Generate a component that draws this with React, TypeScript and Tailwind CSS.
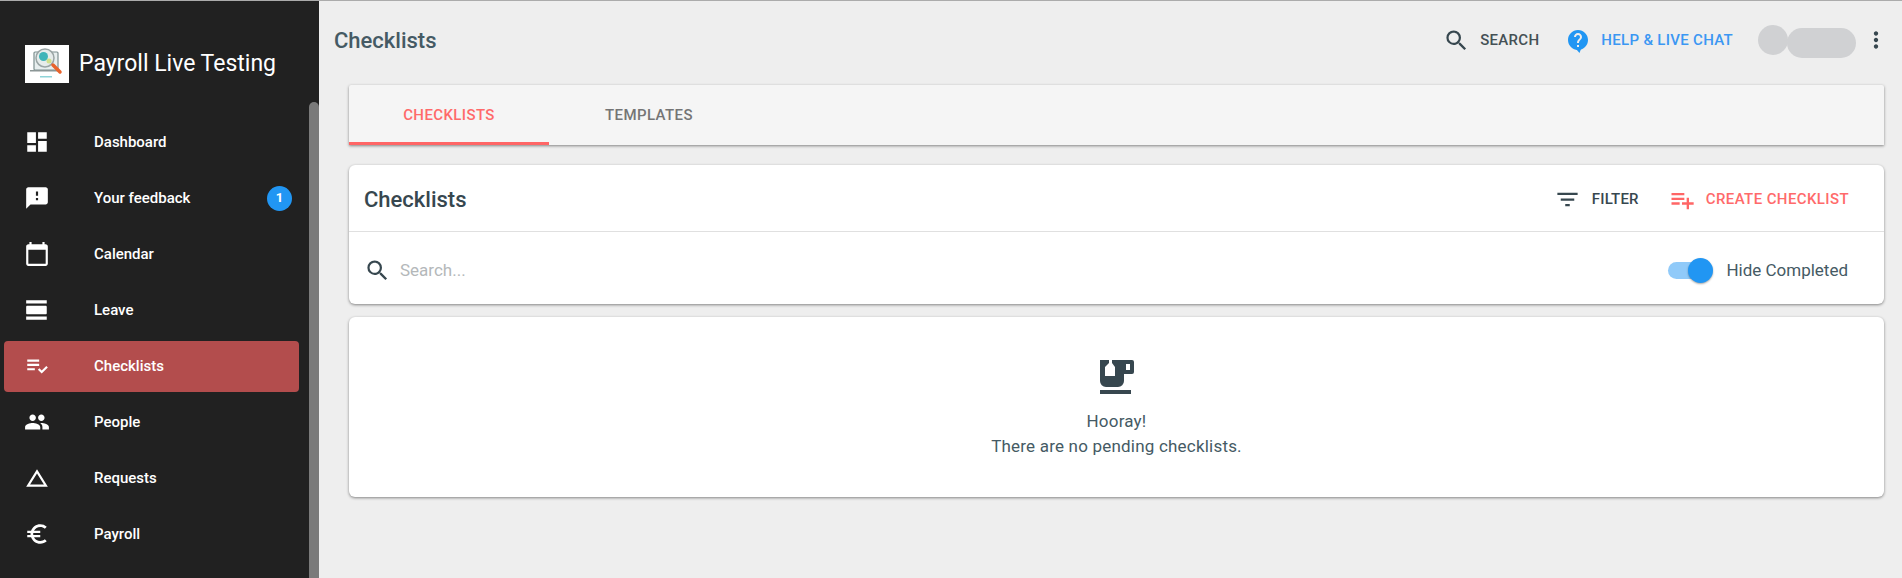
import React from "react";
import {
  MdDashboard, MdFeedback, MdCalendarToday, MdViewDay, MdPlaylistAddCheck, MdPeople,
  MdChangeHistory, MdEuroSymbol, MdSearch, MdMoreVert, MdFilterList, MdPlaylistAdd,
} from "react-icons/md";

const nav = [
  { label: "Dashboard", Icon: MdDashboard },
  { label: "Your feedback", Icon: MdFeedback, badge: "1" },
  { label: "Calendar", Icon: MdCalendarToday },
  { label: "Leave", Icon: MdViewDay },
  { label: "Checklists", Icon: MdPlaylistAddCheck, active: true },
  { label: "People", Icon: MdPeople },
  { label: "Requests", Icon: MdChangeHistory },
  { label: "Payroll", Icon: MdEuroSymbol },
];

function Logo() {
  return (
    <div className="w-[44px] h-[38px] bg-white shrink-0">
      <svg viewBox="0 0 44 38" width="44" height="38">
        <rect x="9" y="7" width="24" height="18" rx="1" fill="#e8efef" stroke="#7d8f8f" strokeWidth="1.2" />
        <rect x="5" y="25" width="30" height="1.5" fill="#8b9696" />
        <circle cx="20" cy="13" r="9" fill="#e6eceb" stroke="#9aa5a5" strokeWidth="1.5" />
        <circle cx="18.5" cy="11.5" r="4.5" fill="#3fb4b8" />
        <circle cx="24" cy="16" r="2.5" fill="#cfe08c" />
        <path d="M28 20l7 7" stroke="#e8632c" strokeWidth="3.5" strokeLinecap="round" />
        <rect x="15" y="31" width="12" height="1.5" fill="#8fd4d8" />
      </svg>
    </div>
  );
}

function HelpBubble() {
  return (
    <svg viewBox="2 2 20 23" width="20" height="23" className="ml-[29px] mt-[2px] text-[#2196f3]" fill="currentColor">
      <path d="M12 2C6.48 2 2 6.48 2 12s4.48 10 10 10 10-4.48 10-10S17.52 2 12 2zm1 17h-2v-2h2v2zm2.07-7.75l-.9.92C13.45 12.9 13 13.5 13 15h-2v-.5c0-1.1.45-2.1 1.17-2.83l1.24-1.26c.37-.36.59-.86.59-1.41 0-1.1-.9-2-2-2s-2 .9-2 2H8c0-2.21 1.79-4 4-4s4 1.79 4 4c0 .88-.36 1.68-.93 2.25z" />
      <path d="M10 21l3.5 4 1.5-4z" />
    </svg>
  );
}

function TeaCup() {
  return (
    <svg viewBox="0 0 34 34" width="34" height="34" className="text-[#37474f]" fill="currentColor">
      <path
        fillRule="evenodd"
        d="M0 0h9v3l-4 4v9h10V7l-3-4V0h20a2 2 0 0 1 2 2v10a2 2 0 0 1-2 2h-8v7a6 6 0 0 1-6 6H6a6 6 0 0 1-6-6V0zM26 4v6h4V4h-4z"
      />
      <rect x="0" y="30" width="31" height="4" />
    </svg>
  );
}

export default function App() {
  return (
    <div className="w-[1902px] h-[578px] overflow-hidden flex flex-col bg-[#eeeeee] font-['Roboto',sans-serif]">
      <div className="h-px bg-[#ababab] shrink-0" />
      <div className="flex flex-1 min-h-0">
        <aside className="w-[319px] shrink-0 flex bg-[#212121] overflow-hidden">
          <div className="w-[309px] shrink-0">
            <div className="h-[113px] pt-[44px] pl-[25px] flex items-start gap-[10px]">
              <Logo />
              <span className="text-[23px] leading-[38px] text-white whitespace-nowrap">Payroll Live Testing</span>
            </div>
            <nav className="flex flex-col pr-[10px] pl-[4px]">
              {nav.map(({ label, Icon, badge, active }) => (
                <div key={label} className="h-[56px] shrink-0 flex items-center">
                  <div className={`w-full h-[51px] flex items-center rounded-[4px] ${active ? "bg-[#b34d4d]" : ""}`}>
                    <div className="w-[90px] pl-[20px] shrink-0">
                      <Icon className="text-white" size={26} />
                    </div>
                    <span className="pt-px text-[15px] font-medium text-white flex-1">{label}</span>
                    {badge && (
                      <span className="w-[25px] h-[25px] mr-[7px] rounded-full bg-[#2196f3] text-white text-[13px] font-bold flex items-center justify-center">
                        {badge}
                      </span>
                    )}
                  </div>
                </div>
              ))}
              <div className="h-[56px] shrink-0 flex items-center justify-end">
                <span className="w-[25px] h-[25px] mr-[7px] rounded-full bg-[#2196f3]" />
              </div>
            </nav>
          </div>
          <div className="w-[10px] shrink-0 pt-[101px]">
            <div className="h-full bg-[#7a7a7a] rounded-t-[5px]" />
          </div>
        </aside>

        <main className="flex-1 min-w-0 flex flex-col">
          <header className="h-[84px] pt-[21px] pl-[15px] pr-[13px] shrink-0 flex items-start">
            <h1 className="pt-px text-[22px] leading-[36px] font-medium text-[#455a64] flex-1">Checklists</h1>
            <div className="flex items-center h-[36px] text-[15px] font-medium tracking-[0.3px]">
              <MdSearch size={27} className="text-[#37474f]" />
              <span className="ml-[10px] text-[#455055]">SEARCH</span>
              <HelpBubble />
              <span className="ml-[13px] text-[#3b97f3]">HELP &amp; LIVE CHAT</span>
              <span className="ml-[25px] w-[30px] h-[30px] rounded-full bg-[#d0d1d3]" />
              <span className="-ml-px mt-[6px] w-[69px] h-[30px] rounded-full bg-[#d0d1d3]" />
              <MdMoreVert size={26} className="ml-[7px] text-[#37474f]" />
            </div>
          </header>

          <div className="pl-[30px] pr-[18px]">
            <div className="h-[60px] bg-[#f5f5f5] rounded-t-[2px] shadow-[0_1px_3px_rgba(0,0,0,0.45)] flex text-[15px] font-medium tracking-[0.4px]">
              <div className="w-[200px] flex items-center justify-center text-[#ff6a6a] border-b-[3px] border-[#ff6666] pt-[3px]">CHECKLISTS</div>
              <div className="w-[200px] flex items-center justify-center text-[#757575]">TEMPLATES</div>
            </div>

            <section className="mt-[20px] h-[139px] bg-white rounded-[6px] shadow-[0_1px_3px_rgba(0,0,0,0.45)]">
              <div className="h-[67px] pt-[3px] pl-[15px] pr-[35px] flex items-center border-b border-[#e0e0e0]">
                <h2 className="text-[22px] font-medium text-[#37474f] flex-1">Checklists</h2>
                <MdFilterList size={27} className="text-[#37474f]" />
                <span className="ml-[11px] text-[15px] font-medium tracking-[0.2px] text-[#37474f]">FILTER</span>
                <MdPlaylistAdd size={28} className="ml-[29px] text-[#ff6666]" />
                <span className="ml-[10px] text-[15px] font-medium tracking-[0.4px] text-[#ff6a6a]">CREATE CHECKLIST</span>
              </div>
              <div className="h-[72px] pt-[5px] pl-[15px] pr-[36px] flex items-center">
                <MdSearch size={27} className="text-[#37474f]" />
                <span className="ml-[9px] text-[17px] text-[#b4b8ba] flex-1">Search...</span>
                <div className="relative w-[33px] h-[17px] rounded-full bg-[#90caf9] mr-[25px]">
                  <span className="absolute -right-[12px] -top-[4px] w-[25px] h-[25px] rounded-full bg-[#2196f3] shadow-[0_1px_2px_rgba(0,0,0,0.35)]" />
                </div>
                <span className="text-[17px] text-[#455a64]">Hide Completed</span>
              </div>
            </section>

            <section className="mt-[13px] h-[180px] bg-white rounded-[6px] shadow-[0_1px_3px_rgba(0,0,0,0.45)] flex flex-col items-center pt-[43px]">
              <TeaCup />
              <p className="mt-[15px] text-[17px] leading-[25px] tracking-[0.2px] text-[#455a64]">Hooray!</p>
              <p className="text-[17px] leading-[25px] tracking-[0.2px] text-[#455a64]">There are no pending checklists.</p>
            </section>
          </div>
        </main>
      </div>
    </div>
  );
}
